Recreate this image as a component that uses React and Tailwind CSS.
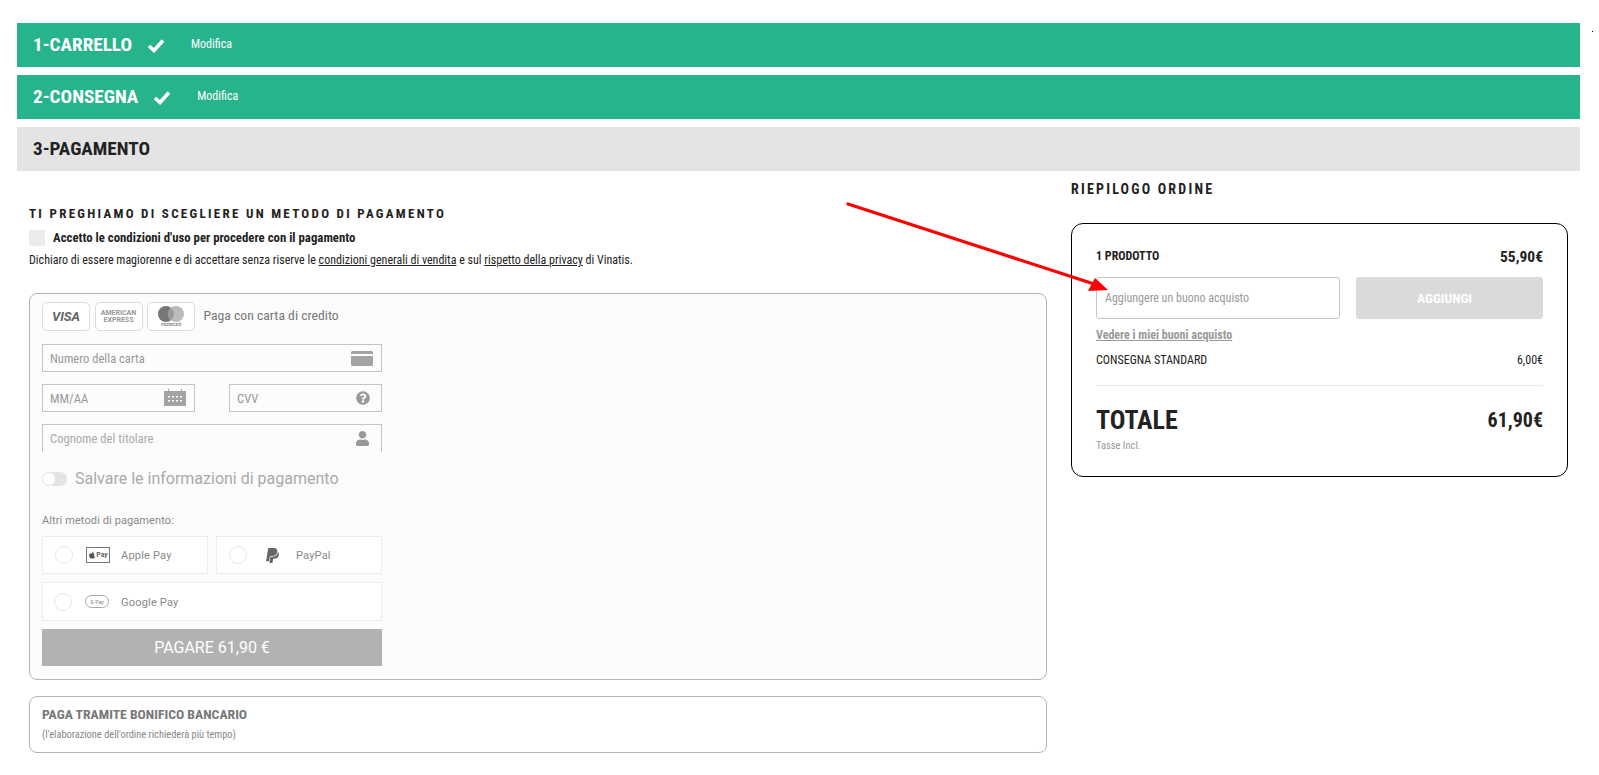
import { FaApple, FaPaypal, FaUser, FaQuestionCircle } from 'react-icons/fa';

function StepBar({ label, done, gap }) {
  return (
    <div className={`flex h-11 items-center pl-4 ${done ? 'bg-[#27b48c] text-white' : 'bg-[#e4e4e4] text-[#222]'}`}>
      <span className="text-[19.2px] font-bold">{label}</span>
      {done && (
        <svg width="18" height="15" viewBox="0 0 18 15" className="ml-[15px]">
          <path d="M2 8l5 4.5L16 2.5" fill="none" stroke="#fff" strokeWidth="3.6" />
        </svg>
      )}
      {done && <span className={`-translate-y-px text-[12px] ${gap}`}>Modifica</span>}
    </div>
  );
}

function CardField({ placeholder, className, children }) {
  return (
    <div className={`flex h-7 items-center justify-between border border-[#c4c4c4] bg-[#fcfcfc] pl-[7px] pr-2 text-[12.6px] text-[#999] ${className}`}>
      <span className="pt-[2px]">{placeholder}</span>
      {children}
    </div>
  );
}

function LogoBox({ children }) {
  return (
    <div className="flex h-[29px] w-12 flex-col items-center justify-center rounded-[5px] border border-[#ddd] bg-white">
      {children}
    </div>
  );
}

function PayOption({ label, icon, className, iconClass, labelClass }) {
  return (
    <div className={`flex items-center border border-[#ececec] bg-white ${className}`}>
      <div className="h-[18px] w-[18px] rounded-full border border-[#e6e6e6]" />
      <div className={`flex shrink-0 justify-center ${iconClass}`}>{icon}</div>
      <span className={`text-[11px] tracking-[0.2px] text-[#888] [font-stretch:100%] ${labelClass}`}>{label}</span>
    </div>
  );
}

export default function App() {
  return (
    <div className="relative h-[775px] w-[1599px] overflow-hidden bg-white pl-[17px] pt-[23px] font-[Roboto,sans-serif] [font-stretch:75%]">
      <div className="flex w-[1563px] flex-col gap-2">
        <StepBar label="1-CARRELLO" done gap="ml-[26px]" />
        <StepBar label="2-CONSEGNA" done gap="ml-[26px]" />
        <StepBar label="3-PAGAMENTO" />
      </div>

      <div className="flex">
        <div className="ml-3 w-[1018px] pt-[35px]">
          <h2 className="text-[13px] font-bold leading-4 tracking-[2.3px] text-[#222]">
            TI PREGHIAMO DI SCEGLIERE UN METODO DI PAGAMENTO
          </h2>
          <div className="mt-2 flex h-4 items-center">
            <div className="h-4 w-4 bg-[#ececec]" />
            <span className="ml-2 text-[12.8px] font-bold text-[#222]">Accetto le condizioni d'uso per procedere con il pagamento</span>
          </div>
          <p className="mt-[6px] text-[12px] leading-4 text-[#222]">
            Dichiaro di essere magiorenne e di accettare senza riserve le <u>condizioni generali di vendita</u> e sul <u>rispetto della privacy</u> di Vinatis.
          </p>

          <div className="mt-[25px] h-[387px] rounded-lg border border-[#b4b4b4] bg-[#fcfcfc] pl-3 pt-2">
            <div className="flex items-center gap-[4.5px]">
              <LogoBox>
                <span className="text-[13px] font-bold italic text-[#666] [font-stretch:100%]">VISA</span>
              </LogoBox>
              <LogoBox>
                <span className="text-center text-[7px] font-bold leading-[7px] text-[#999] [font-stretch:100%]">AMERICAN<br />EXPRESS</span>
              </LogoBox>
              <LogoBox>
                <svg width="26" height="16" viewBox="0 0 26 16">
                  <circle cx="8" cy="8" r="8" fill="#777" />
                  <circle cx="18" cy="8" r="8" fill="#bbb" />
                  <path d="M13 1.75a8 8 0 0 1 0 12.5a8 8 0 0 1 0-12.5z" fill="#999" />
                </svg>
                <span className="text-[4.5px] leading-[6px] text-[#666]">mastercard</span>
              </LogoBox>
              <span className="ml-1 -translate-y-px text-[13.7px] text-[#777]">Paga con carta di credito</span>
            </div>

            <div className="mt-[13px] flex w-[340px] flex-col gap-3">
              <CardField placeholder="Numero della carta">
                <svg width="22" height="15" viewBox="0 0 22 15">
                  <path d="M0 1.5A1.5 1.5 0 0 1 1.5 0h19A1.5 1.5 0 0 1 22 1.5V3H0zM0 5h22v8.5a1.5 1.5 0 0 1-1.5 1.5h-19A1.5 1.5 0 0 1 0 13.5z" fill="#a3a3a3" />
                </svg>
              </CardField>
              <div className="flex justify-between">
                <CardField placeholder="MM/AA" className="w-[153px]">
                  <svg width="22" height="18" viewBox="0 0 22 18" className="-mt-[2px]">
                    <path d="M0 3h4V1h1v2h12V1h1v2h4v15H0z" fill="#a3a3a3" />
                    <path d="M4 8h2v1.5H4zM8 8h2v1.5H8zM12 8h2v1.5h-2zM16 8h2v1.5h-2zM4 12h2v1.5H4zM8 12h2v1.5H8zM12 12h2v1.5h-2zM16 12h2v1.5h-2z" fill="#fcfcfc" />
                  </svg>
                </CardField>
                <CardField placeholder="CVV" className="w-[153px]">
                  <FaQuestionCircle className="mr-[3px] text-[14px] text-[#999]" />
                </CardField>
              </div>
              <CardField placeholder="Cognome del titolare" className="border-b-0 text-[#aaa]">
                <FaUser className="mr-[3px] text-[15px] text-[#999]" />
              </CardField>
            </div>

            <div className="mt-[15px] flex items-center">
              <div className="relative h-[14px] w-[25px] rounded-full bg-[#e4e4e4]">
                <div className="absolute left-0 top-0 h-[14px] w-[14px] rounded-full border border-[#e4e4e4] bg-white" />
              </div>
              <span className="ml-2 text-[16px] text-[#aaa] [font-stretch:100%]">Salvare le informazioni di pagamento</span>
            </div>

            <p className="mt-[22px] text-[11px] leading-4 tracking-[0.1px] text-[#888] [font-stretch:100%]">Altri metodi di pagamento:</p>

            <div className="mt-[7px] flex w-[340px] flex-wrap gap-2">
              <PayOption
                label="Apple Pay"
                className="h-[38px] w-[166px] pl-3"
                iconClass="ml-[13px] w-6"
                labelClass="ml-[11px] translate-y-px"
                icon={
                  <span className="flex h-4 w-6 items-center justify-center border border-[#777] text-[8px] font-medium text-[#555]">
                    <FaApple className="text-[8px]" />Pay
                  </span>
                }
              />
              <PayOption
                label="PayPal"
                className="h-[38px] w-[166px] pl-3"
                iconClass="ml-[13px] w-[24px]"
                labelClass="ml-3 translate-y-px"
                icon={<FaPaypal className="text-[17px] text-[#666]" />}
              />
              <PayOption
                label="Google Pay"
                className="h-[39px] w-[340px] pl-[11px]"
                iconClass="ml-[13px] w-6"
                labelClass="ml-3 translate-y-[2px]"
                icon={
                  <span className="flex h-[13px] w-6 items-center justify-center rounded-full border border-[#aaa] text-[6px] text-[#888]">G Pay</span>
                }
              />
            </div>

            <div className="mt-2 flex h-[37px] w-[340px] items-center justify-center bg-[#b2b2b2] text-[16px] text-white [font-stretch:100%]">
              PAGARE 61,90 €
            </div>
          </div>

          <div className="mt-4 h-[57px] rounded-lg border border-[#b4b4b4] pl-3 pt-[9px]">
            <p className="text-[13.7px] font-bold leading-4 text-[#777]">PAGA TRAMITE BONIFICO BANCARIO</p>
            <p className="mt-[6px] text-[10.4px] leading-[14px] text-[#888]">(l'elaborazione dell'ordine richiederà più tempo)</p>
          </div>
        </div>

        <div className="ml-6 w-[497px] pt-[10px]">
          <h2 className="text-[14px] font-bold leading-4 tracking-[2.2px] text-[#222]">RIEPILOGO ORDINE</h2>
          <div className="mt-[26px] h-[254px] rounded-xl border border-black px-6 pt-6">
            <div className="flex h-4 items-center justify-between">
              <span className="text-[12px] font-bold text-[#222]">1 PRODOTTO</span>
              <span className="translate-y-[2px] text-[15.5px] font-bold text-[#222]">55,90€</span>
            </div>
            <div className="mt-[13px] flex justify-between">
              <div className="flex h-[42px] w-[244px] items-center rounded-[3px] border border-[#c4c4c4] pl-2 text-[12px] text-[#999]">
                Aggiungere un buono acquisto
              </div>
              <div className="flex h-[42px] w-[187px] items-center justify-center rounded-[3px] bg-[#dadada] pr-[10px] text-[13.5px] font-bold text-white">
                AGGIUNGI
              </div>
            </div>
            <p className="mt-2 text-[12px] font-bold leading-4 text-[#999] underline">Vedere i miei buoni acquisto</p>
            <div className="mt-[9px] flex h-4 items-center justify-between text-[12px] text-[#222]">
              <span>CONSEGNA STANDARD</span>
              <span>6,00€</span>
            </div>
            <div className="mt-[17px] h-px bg-[#ececec]" />
            <div className="mt-5 flex h-7 items-center justify-between text-[#222]">
              <span className="text-[26px] font-bold">TOTALE</span>
              <span className="text-[20px] font-bold">61,90€</span>
            </div>
            <p className="mt-[6px] text-[10.5px] leading-3 text-[#999]">Tasse Incl.</p>
          </div>
        </div>
      </div>

      <svg className="absolute left-[840px] top-[198px]" width="275" height="100" viewBox="840 198 275 100">
        <line x1="848" y1="204" x2="1094" y2="284" stroke="#f00" strokeWidth="3.2" strokeLinecap="round" />
        <polygon points="1108,290 1088,291 1095,278" fill="#f00" />
      </svg>
      <div className="absolute left-[1592px] top-[31px] h-px w-px bg-black" />
    </div>
  );
}
